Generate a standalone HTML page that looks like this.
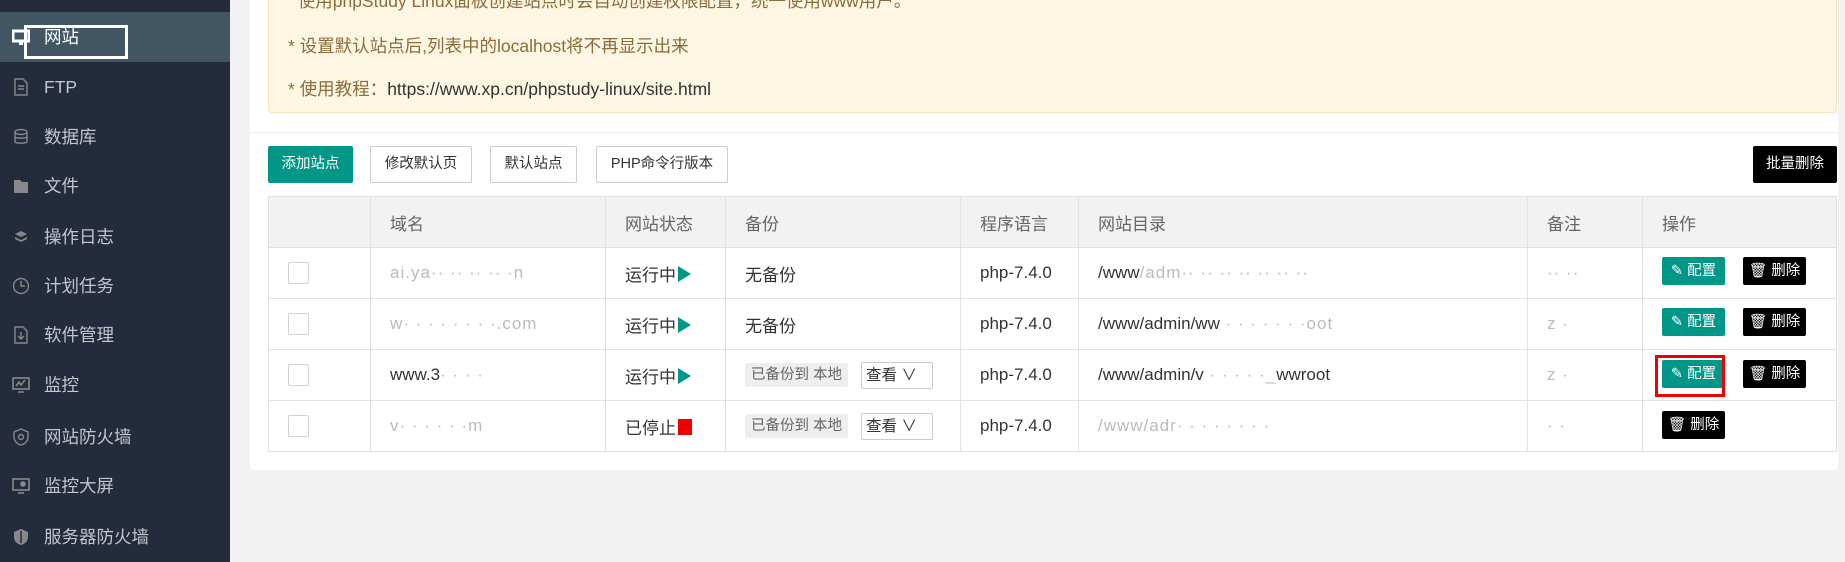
<!DOCTYPE html>
<html><head><meta charset="utf-8"><style>
*{margin:0;padding:0;box-sizing:border-box}
body{width:1845px;height:562px;overflow:hidden;background:#f2f2f2;font-family:"Liberation Sans","Noto Sans CJK SC",sans-serif;position:relative}
.sb{position:absolute;left:0;top:0;width:230px;height:562px;background:#232b3c}
.act{position:absolute;left:0;top:12px;width:230px;height:50px;background:#425563}
.box{position:absolute;left:24px;top:25px;width:104px;height:34px;border:3px solid #fff}
.mi{position:absolute;left:44px;font-size:17.5px;color:#c2c5cc;line-height:20px}
.ic{position:absolute;left:12px;width:18px;height:18px}
.panel{position:absolute;left:250px;top:0;width:1588px;height:470px;background:#fff;border-radius:0 0 3px 3px}
.alert{position:absolute;left:268px;top:-5px;width:1569px;height:118px;background:#fdf6e3;border:1px solid #f6e3bb;border-radius:4px}
.at{position:absolute;left:288px;font-size:17.5px;color:#8a6d3b;line-height:20px}
.sep{position:absolute;left:250px;top:132px;width:1588px;height:1px;background:#eee}
.btn{position:absolute;top:146px;height:37px;border:1px solid #ccc;border-radius:2px;font-size:14.5px;color:#333;text-align:center;line-height:35px;background:#fff}
table{position:absolute;left:268px;top:196px;width:1569px;border-collapse:collapse;font-size:17px;color:#333}
td,th{border:1px solid #e2e2e2;height:51px;text-align:left;padding-left:19px;font-weight:normal;vertical-align:middle}
th{background:#f2f2f2;color:#666}
.cb{display:inline-block;width:21px;height:22px;border:1px solid #d2d2d2;border-radius:2px;vertical-align:middle}
.tri{display:inline-block;width:0;height:0;border-left:13px solid #009688;border-top:8px solid transparent;border-bottom:8px solid transparent;vertical-align:-1px;margin-left:2px}
.sq{display:inline-block;width:14px;height:16px;background:#e00;vertical-align:-1px;margin-left:2px}
.bd{display:inline-block;background:#eee;color:#666;font-size:14.5px;padding:0 6px;height:24px;line-height:24px;border-radius:2px;vertical-align:middle}
.sel{display:inline-block;border:1px solid #ccc;width:72px;height:27px;line-height:25px;font-size:15.5px;padding-left:4px;margin-left:13px;border-radius:2px;vertical-align:middle}
.ab{position:absolute;height:28px;width:63px;font-size:14.5px;color:#fff;line-height:28px;text-align:center;border-radius:2px}
.g{background:#009688}.k{background:#000}
.blur{color:#bbb;letter-spacing:1px}
</style></head><body>
<div class="sb">
<div class="act"></div>
<svg class="ic" style="top:29px" viewBox="0 0 18 18"><rect x="1" y="2" width="16" height="10" fill="none" stroke="#fff" stroke-width="3"/><rect x="7" y="13" width="4" height="3" fill="#fff"/></svg>
<div class="mi" style="top:27px;color:#fff">网站</div>
<div class="box"></div>
<svg class="ic" style="top:78px" viewBox="0 0 18 18" fill="none" stroke="#888" stroke-width="1.4"><path d="M3 1h8l4 4v12H3z"/><path d="M6 8h6M6 11h6"/></svg><div class="mi" style="top:77px">FTP</div>
<svg class="ic" style="top:128px" viewBox="0 0 18 18" fill="none" stroke="#888" stroke-width="1.4"><ellipse cx="9" cy="4" rx="6" ry="2.5"/><path d="M3 4v10c0 1.5 12 1.5 12 0V4M3 9c0 1.5 12 1.5 12 0"/></svg><div class="mi" style="top:127px">数据库</div>
<svg class="ic" style="top:177px" viewBox="0 0 18 18"><path d="M2 3h6l2 2h6v11H2z" fill="#888"/></svg><div class="mi" style="top:176px">文件</div>
<svg class="ic" style="top:228px" viewBox="0 0 18 18" fill="#888"><path d="M9 3l6 3-6 3-6-3z"/><path d="M3 9l6 3 6-3v2l-6 3-6-3z"/></svg><div class="mi" style="top:227px">操作日志</div>
<svg class="ic" style="top:277px" viewBox="0 0 18 18" fill="none" stroke="#888" stroke-width="1.4"><circle cx="9" cy="9" r="7.5"/><path d="M9 4v5h4"/></svg><div class="mi" style="top:276px">计划任务</div>
<svg class="ic" style="top:326px" viewBox="0 0 18 18" fill="none" stroke="#888" stroke-width="1.4"><path d="M3 1h8l4 4v12H3z"/><path d="M9 6v7M6 10l3 3 3-3"/></svg><div class="mi" style="top:325px">软件管理</div>
<svg class="ic" style="top:376px" viewBox="0 0 18 18" fill="none" stroke="#888" stroke-width="1.6"><rect x="1" y="2" width="16" height="11"/><path d="M4 10l3-4 2 3 4-5M6 16h6"/></svg><div class="mi" style="top:375px">监控</div>
<svg class="ic" style="top:428px" viewBox="0 0 18 18" fill="none" stroke="#888" stroke-width="1.4"><path d="M9 1l7 3v5c0 4-3 7-7 8-4-1-7-4-7-8V4z"/><circle cx="9" cy="9" r="2.5"/></svg><div class="mi" style="top:427px">网站防火墙</div>
<svg class="ic" style="top:477px" viewBox="0 0 18 18" fill="none" stroke="#888" stroke-width="1.6"><rect x="1" y="2" width="16" height="11"/><path d="M6 16h6"/><circle cx="11" cy="7" r="2" fill="#888"/></svg><div class="mi" style="top:476px">监控大屏</div>
<svg class="ic" style="top:528px" viewBox="0 0 18 18"><path d="M9 1l7 3v5c0 4-3 7-7 8-4-1-7-4-7-8V4z" fill="#888"/><path d="M9 3v12" stroke="#232b3c" stroke-width="1.5"/></svg><div class="mi" style="top:527px">服务器防火墙</div>
</div>
<div class="panel"></div>
<div class="alert"></div>
<div class="at" style="top:-9px">&nbsp;&nbsp;使用phpStudy Linux面板创建站点时会自动创建权限配置，统一使用www用户。</div>
<div class="at" style="top:36px">* 设置默认站点后,列表中的localhost将不再显示出来</div>
<div class="at" style="top:79px">* 使用教程：<span style="color:#333">https://www.xp.cn/phpstudy-linux/site.html</span></div>
<div class="sep"></div>
<div class="btn" style="left:268px;width:85px;background:#009688;border-color:#009688;color:#fff">添加站点</div>
<div class="btn" style="left:370px;width:102px">修改默认页</div>
<div class="btn" style="left:490px;width:87px">默认站点</div>
<div class="btn" style="left:596px;width:132px">PHP命令行版本</div>
<div class="btn" style="left:1753px;width:84px;background:#000;border-color:#000;color:#fff">批量删除</div>
<table>
<tr><th style="width:102px"></th><th style="width:235px">域名</th><th style="width:120px">网站状态</th><th style="width:235px">备份</th><th style="width:118px">程序语言</th><th style="width:449px">网站目录</th><th style="width:115px">备注</th><th>操作</th></tr>
<tr><td><span class="cb"></span></td><td class="blur">ai.ya·· ·· ·· ·· ·n</td><td>运行中<span class="tri"></span></td><td>无备份</td><td>php-7.4.0</td><td>/www<span class="blur">/adm·· ·· ·· ·· ·· ·· ··</span></td><td class="blur">·· ··</td><td></td></tr>
<tr><td><span class="cb"></span></td><td class="blur">w· · · · · · · ·.com</td><td>运行中<span class="tri"></span></td><td>无备份</td><td>php-7.4.0</td><td>/www/admin/ww<span class="blur"> · · · · · · ·oot</span></td><td class="blur">z ·</td><td></td></tr>
<tr><td><span class="cb"></span></td><td>www.3<span class="blur">· · · ·</span></td><td>运行中<span class="tri"></span></td><td><span class="bd">已备份到 本地</span><span class="sel">查看 ∨</span></td><td>php-7.4.0</td><td>/www/admin/v<span class="blur"> · · · · ·_</span>wwroot</td><td class="blur">z ·</td><td></td></tr>
<tr><td><span class="cb"></span></td><td class="blur">v· · · · · ·m</td><td>已停止<span class="sq"></span></td><td><span class="bd">已备份到 本地</span><span class="sel">查看 ∨</span></td><td>php-7.4.0</td><td class="blur">/www/adr· · · · · · · ·</td><td class="blur">· ·</td><td></td></tr>
</table>
<div class="ab g" style="left:1662px;top:257px">✎ 配置</div><div class="ab k" style="left:1743px;top:257px">🗑 删除</div>
<div class="ab g" style="left:1662px;top:308px">✎ 配置</div><div class="ab k" style="left:1743px;top:308px">🗑 删除</div>
<div class="ab g" style="left:1662px;top:360px">✎ 配置</div><div class="ab k" style="left:1743px;top:360px">🗑 删除</div>
<div style="position:absolute;left:1655px;top:355px;width:70px;height:42px;border:3px solid #e00"></div>
<div class="ab k" style="left:1662px;top:411px">🗑 删除</div>
</body></html>
